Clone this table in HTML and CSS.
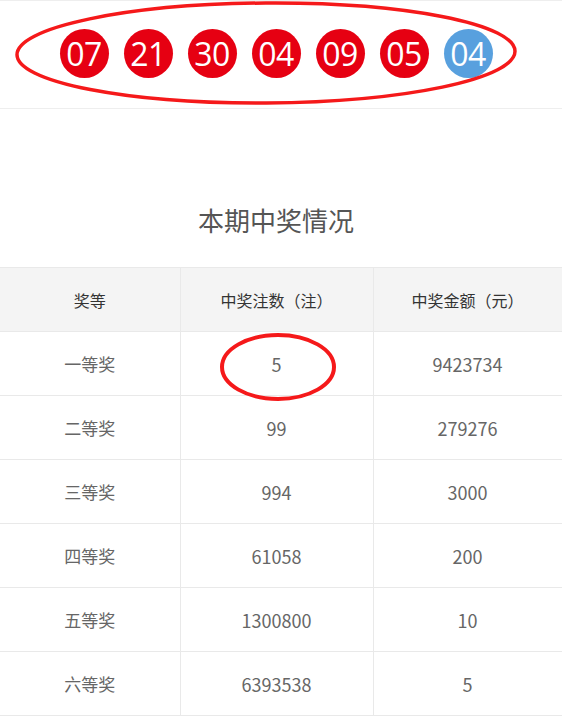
FILE: index.html
```html
<!DOCTYPE html>
<html lang="zh">
<head>
<meta charset="utf-8">
<link rel="stylesheet" href="styles.css">
</head>
<body>
<div class="page">
  <section class="draw">
    <div class="balls">
      <span class="ball red">07</span>
      <span class="ball red">21</span>
      <span class="ball red">30</span>
      <span class="ball red">04</span>
      <span class="ball red">09</span>
      <span class="ball red">05</span>
      <span class="ball blue">04</span>
    </div>
  </section>
  <h2 class="title">本期中奖情况</h2>
  <table class="prizes">
    <thead>
      <tr><th class="c1">奖等</th><th class="c2">中奖注数（注）</th><th class="c3">中奖金额（元）</th></tr>
    </thead>
    <tbody>
      <tr><td>一等奖</td><td>5</td><td>9423734</td></tr>
      <tr><td>二等奖</td><td>99</td><td>279276</td></tr>
      <tr><td>三等奖</td><td>994</td><td>3000</td></tr>
      <tr><td>四等奖</td><td>61058</td><td>200</td></tr>
      <tr><td>五等奖</td><td>1300800</td><td>10</td></tr>
      <tr><td>六等奖</td><td>6393538</td><td>5</td></tr>
    </tbody>
  </table>
  <svg class="mark mark-balls" width="510" height="108" viewBox="0 0 510 108">
    <ellipse cx="255" cy="53" rx="249" ry="50" fill="none" stroke="#f5191a" stroke-width="3.5" transform="rotate(-0.4 255 53)"/>
  </svg>
  <svg class="mark mark-five" width="124" height="76" viewBox="0 0 124 76">
    <ellipse cx="62" cy="38" rx="56" ry="32" fill="none" stroke="#f5191a" stroke-width="4"/>
  </svg>
</div>
</body>
</html>
```
FILE: styles.css
```css
* { box-sizing: border-box; }
html, body { margin: 0; padding: 0; background: #fff; }
body {
  font-family: "Noto Sans CJK SC", "Noto Sans", sans-serif;
  color: #666;
}
.page {
  position: relative;
  width: 562px;
  height: 716px;
  overflow: hidden;
}
.draw {
  height: 109px;
  border-top: 1px solid #eee;
  border-bottom: 1px solid #eee;
  display: flex;
  align-items: center;
  padding-right: 10px;
}
.balls {
  flex: 1;
  display: flex;
  justify-content: center;
  gap: 15px;
  padding-bottom: 2px;
}
.ball {
  width: 49px;
  height: 49px;
  border-radius: 50%;
  color: #fff;
  font-family: "Open Sans", "Noto Sans", sans-serif;
  font-size: 32px;
  line-height: 49px;
  text-align: center;
  letter-spacing: -0.5px;
}
.red { background: #e60012; }
.blue { background: #58a0de; }
.title {
  margin: 0;
  padding: 91px 10px 0 0;
  height: 158px;
  font-size: 26px;
  font-weight: normal;
  color: #555;
  text-align: center;
  line-height: 40px;
}
.prizes {
  width: 562px;
  border-collapse: collapse;
  table-layout: fixed;
}
.prizes th, .prizes td {
  height: 64px;
  border: 1px solid #e9e9e9;
  text-align: center;
  font-weight: normal;
  padding: 0;
}
.prizes th {
  background: #f4f4f4;
  color: #333;
  font-size: 16px;
}
.prizes td {
  font-size: 17px;
  color: #666;
}
.prizes tbody td:not(:first-child) { font-size: 18px; }
.prizes tr > :first-child { border-left: none; }
.c1 { width: 180px; }
.c2 { width: 193px; }
.c3 { width: 189px; }
.mark { position: absolute; }
.mark-balls { left: 11px; top: 0; }
.mark-five { left: 216px; top: 329px; }
```
